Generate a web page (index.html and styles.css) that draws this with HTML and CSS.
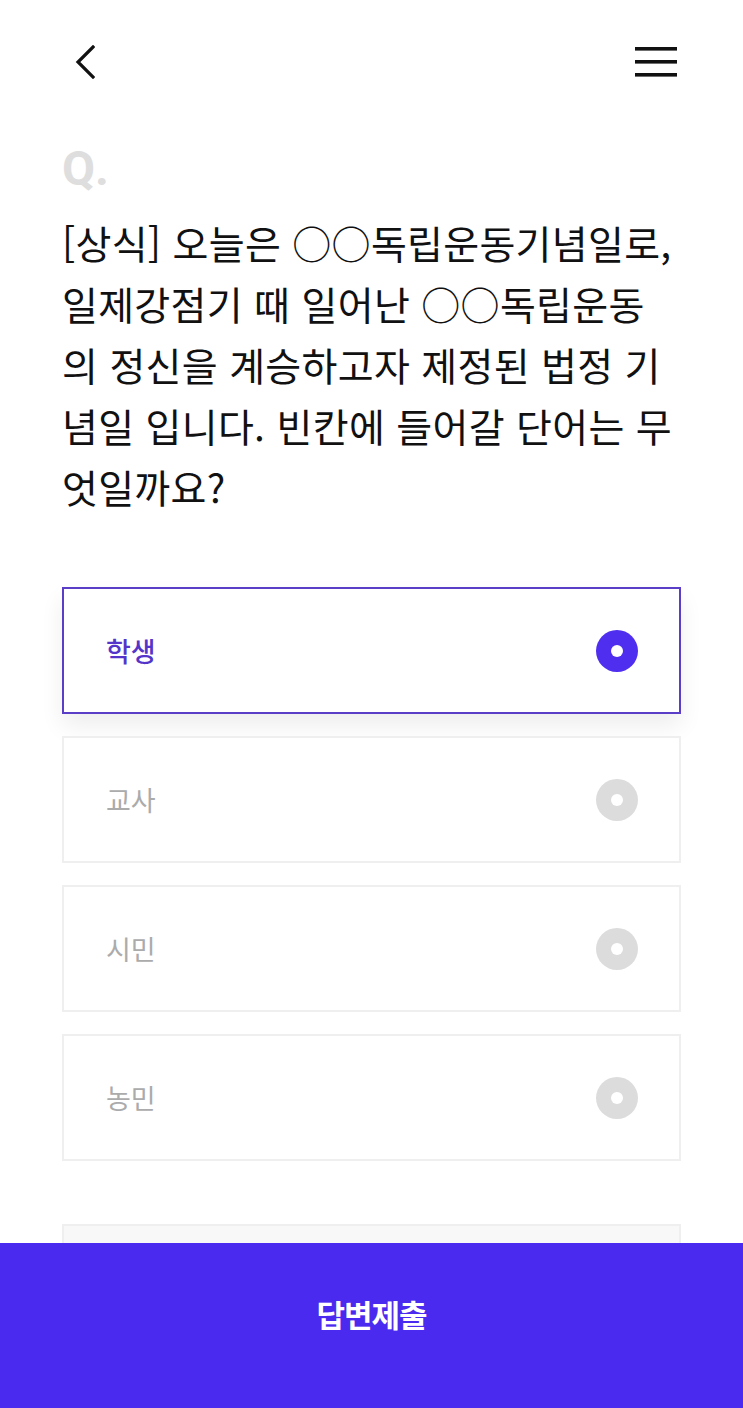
FILE: index.html
```html
<!DOCTYPE html>
<html lang="ko">
<head>
    <meta charset="UTF-8">
    <meta name="viewport" content="width=device-width, initial-scale=1.0">
    <title>퀴즈</title>
    <link rel="stylesheet" href="styles.css">
</head>
<body>
    <header class="top-bar">
        <a href="#" class="back-btn" aria-label="뒤로">
            <svg width="20" height="34" viewBox="0 0 20 34">
                <polyline points="18,2 3,17 18,32" fill="none" stroke="#111" stroke-width="3.2" stroke-linecap="square"/>
            </svg>
        </a>
        <a href="#" class="menu-btn" aria-label="메뉴">
            <svg width="42" height="30" viewBox="0 0 42 30">
                <rect x="0" y="0" width="42" height="3.6" fill="#111"/>
                <rect x="0" y="13" width="42" height="3.6" fill="#111"/>
                <rect x="0" y="26" width="42" height="3.6" fill="#111"/>
            </svg>
        </a>
    </header>

    <main class="quiz">
        <div class="q-mark">Q.</div>
        <p class="question">[상식] 오늘은 ○○독립운동기념일로,<br>일제강점기 때 일어난 ○○독립운동<br>의 정신을 계승하고자 제정된 법정 기<br>념일 입니다. 빈칸에 들어갈 단어는 무<br>엇일까요?</p>

        <ul class="options">
            <li class="option selected">
                <span class="option-text">학생</span>
                <span class="radio"></span>
            </li>
            <li class="option">
                <span class="option-text">교사</span>
                <span class="radio"></span>
            </li>
            <li class="option">
                <span class="option-text">시민</span>
                <span class="radio"></span>
            </li>
            <li class="option">
                <span class="option-text">농민</span>
                <span class="radio"></span>
            </li>
        </ul>

        <div class="hint-box"></div>
    </main>

    <button class="submit-btn">답변제출</button>
</body>
</html>
```

FILE: styles.css
```css
body {
    font-family: "Noto Sans CJK KR", "Noto Sans", sans-serif;
    background-color: #fff;
    color: #111;
    margin: 0;
    padding: 0;
}

.top-bar {
    height: 124px;
    display: flex;
    justify-content: space-between;
    align-items: center;
    padding: 0 66px 0 75px;
}

.top-bar a {
    display: flex;
}

.quiz {
    padding: 21px 62px 0 62px;
}

.q-mark {
    font-family: Roboto, sans-serif;
    font-weight: 700;
    font-size: 48px;
    line-height: 48px;
    color: #dedede;
}

.question {
    margin: 19px 0 0 0;
    font-size: 39px;
    line-height: 61px;
    letter-spacing: 0.3px;
    white-space: nowrap;
}

.options {
    list-style: none;
    margin: 70px 0 0 0;
    padding: 0;
}

.option {
    box-sizing: border-box;
    height: 127px;
    margin-bottom: 22px;
    padding: 0 41px 0 42px;
    display: flex;
    justify-content: space-between;
    align-items: center;
    border: 2px solid #efefef;
    background-color: #fff;
}

.option-text {
    font-size: 27px;
    color: #ababab;
}

.radio {
    width: 42px;
    height: 42px;
    border-radius: 50%;
    background-color: #dcdcdc;
    display: flex;
    align-items: center;
    justify-content: center;
}

.radio::after {
    content: "";
    width: 12px;
    height: 12px;
    border-radius: 50%;
    background-color: #fff;
}

.option.selected {
    border-color: #5b3ec8;
    box-shadow: 0 12px 22px rgba(0, 0, 0, 0.07);
}

.option.selected .option-text {
    color: #5434c9;
    font-weight: 500;
}

.option.selected .radio {
    background-color: #4f2ef0;
}

.hint-box {
    margin-top: 63px;
    height: 127px;
    border: 2px solid #efefef;
    background-color: #f8f8f8;
}

.submit-btn {
    position: fixed;
    left: 0;
    bottom: 0;
    width: 100%;
    height: 165px;
    border: none;
    padding: 0 0 24px 0;
    background-color: #4b2aef;
    color: #fff;
    font-family: "Noto Sans CJK KR", sans-serif;
    font-size: 31px;
    font-weight: 700;
    letter-spacing: -1px;
    cursor: pointer;
}
```
